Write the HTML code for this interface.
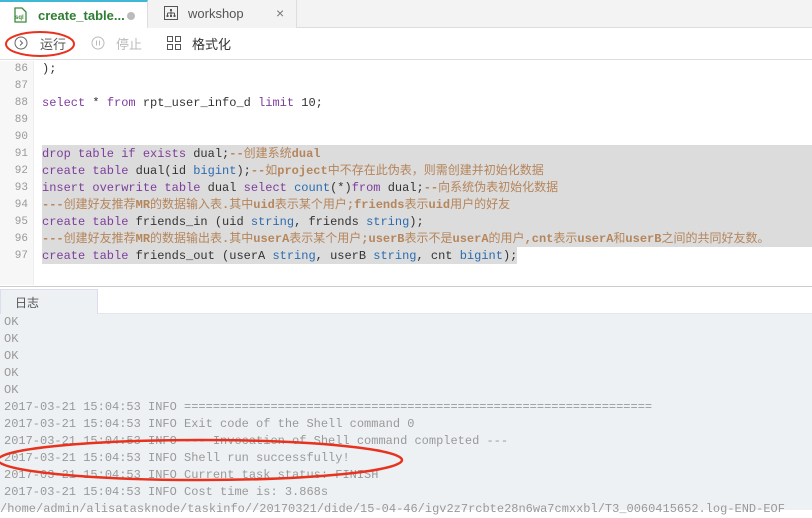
<!DOCTYPE html>
<html><head><meta charset="utf-8"><style>
*{margin:0;padding:0;box-sizing:border-box}
body{width:812px;height:510px;overflow:hidden;background:#fff;font-family:"Liberation Sans","Noto Sans CJK SC",sans-serif;position:relative}
.tabs{position:absolute;left:0;top:0;width:812px;height:28px;background:#f3f3f3;border-bottom:1px solid #ddd}
.tab1{position:absolute;left:0;top:0;width:148px;height:29px;background:#fff;border-top:2px solid #3fb8d8;border-right:1px solid #ddd}
.tab2{position:absolute;left:148px;top:0;width:149px;height:28px;background:#f3f3f3;border-right:1px solid #ddd}
.tb{position:absolute;left:0;top:28px;width:812px;height:32px;border-bottom:1px solid #ddd;background:#fff;font-size:13px;color:#555}
.gut{position:absolute;left:0;top:61px;width:34px;height:224px;background:#f7f7f7;border-right:1px solid #eee}
.code,.log{font-family:"Liberation Mono","Noto Sans CJK SC",monospace;font-size:12px;white-space:pre}
.ln{position:absolute;left:0;width:28px;text-align:right;color:#999;font-size:11px;line-height:17px}
.cl{position:absolute;left:42px;line-height:17px;color:#333}
.k{color:#7d3d9c}.t{color:#2b6cb0}.c{color:#b5855b}.cb{color:#b5855b;font-weight:bold}
.sel{position:absolute;background:#dcdcdc}
.logtabs{position:absolute;left:0;top:286px;width:812px;height:28px;background:#fff;border-top:1px solid #ccc;border-bottom:1px solid #e3e6ea}
.logtab{position:absolute;left:0;top:2px;width:98px;height:27px;background:#eef1f4;border:1px solid #dde;border-bottom:none;font-size:12px;color:#555;padding:4px 0 0 14px}
.logbody{position:absolute;left:0;top:314px;width:812px;height:196px;background:#eef1f4}
.lg{position:absolute;left:4px;line-height:17px;color:#999}
</style></head><body>
<div class="tabs">
 <div class="tab1">
  <svg style="position:absolute;left:13px;top:5px" width="14" height="16" viewBox="0 0 14 16"><path d="M2 1h7l4 4v10H2z" fill="none" stroke="#3a8a3a" stroke-width="1.3"/><text x="2" y="12" font-size="6" font-weight="bold" fill="#3a8a3a" font-family="Liberation Sans">sql</text></svg>
  <span style="position:absolute;left:38px;top:6px;font-size:13px;font-weight:bold;color:#2e7d32">create_table...</span>
  <span style="position:absolute;left:127px;top:10px;width:8px;height:8px;border-radius:50%;background:#bbb"></span>
 </div>
 <div class="tab2">
  <svg style="position:absolute;left:16px;top:6px" width="14" height="14" viewBox="0 0 14 14"><rect x="0.5" y="0.5" width="13" height="13" fill="none" stroke="#555"/><rect x="6" y="3" width="2" height="2" fill="#555"/><path d="M7 5v2M3.5 7h7M3.5 7v2M7 7v2M10.5 7v2" stroke="#555"/><rect x="2.5" y="9" width="2" height="2" fill="#555"/><rect x="6" y="9" width="2" height="2" fill="#555"/><rect x="9.5" y="9" width="2" height="2" fill="#555"/></svg>
  <span style="position:absolute;left:40px;top:6px;font-size:13px;color:#555">workshop</span>
  <span style="position:absolute;left:128px;top:5px;font-size:14px;color:#777">×</span>
 </div>
</div>
<div class="tb">
 <svg style="position:absolute;left:14px;top:8px" width="14" height="14"><circle cx="7" cy="7" r="6" fill="none" stroke="#666"/><path d="M6 4.5l2.5 2.5L6 9.5" fill="none" stroke="#666"/></svg>
 <span style="position:absolute;left:40px;top:6px">运行</span>
 <svg style="position:absolute;left:91px;top:8px" width="14" height="14"><circle cx="7" cy="7" r="6" fill="none" stroke="#bbb"/><path d="M5.5 4.5v5M8.5 4.5v5" stroke="#bbb"/></svg>
 <span style="position:absolute;left:116px;top:6px;color:#bbb">停止</span>
 <svg style="position:absolute;left:167px;top:8px" width="14" height="14"><rect x="0.5" y="0.5" width="5" height="5" fill="none" stroke="#555"/><rect x="8.5" y="0.5" width="5" height="5" fill="none" stroke="#555"/><rect x="0.5" y="8.5" width="5" height="5" fill="none" stroke="#555"/><rect x="8.5" y="8.5" width="5" height="5" fill="none" stroke="#555"/></svg>
 <span style="position:absolute;left:192px;top:6px;color:#333">格式化</span>
</div>
<svg style="position:absolute;left:4px;top:29px" width="72" height="30"><ellipse cx="36" cy="15" rx="34" ry="12" fill="none" stroke="#e8321e" stroke-width="2"/></svg>
<div class="gut"></div>
<div class="sel" style="left:42px;top:145px;width:770px;height:102px"></div>
<div class="sel" style="left:42px;top:247px;width:475px;height:17px"></div>
<div class="code">
<div class="ln" style="top:61px">86</div><div class="ln" style="top:78px">87</div><div class="ln" style="top:95px">88</div><div class="ln" style="top:112px">89</div><div class="ln" style="top:129px">90</div><div class="ln" style="top:146px">91</div><div class="ln" style="top:163px">92</div><div class="ln" style="top:180px">93</div><div class="ln" style="top:197px">94</div><div class="ln" style="top:214px">95</div><div class="ln" style="top:231px">96</div><div class="ln" style="top:248px">97</div>
<div class="cl" style="top:61px">);</div>
<div class="cl" style="top:95px"><span class="k">select</span> * <span class="k">from</span> rpt_user_info_d <span class="k">limit</span> 10;</div>
<div class="cl" style="top:146px"><span class="k">drop table if exists</span> dual;<span class="cb">--</span><span class="c">创建系统</span><span class="cb">dual</span></div>
<div class="cl" style="top:163px"><span class="k">create table</span> dual(id <span class="t">bigint</span>);<span class="cb">--</span><span class="c">如</span><span class="cb">project</span><span class="c">中不存在此伪表，则需创建并初始化数据</span></div>
<div class="cl" style="top:180px"><span class="k">insert overwrite table</span> dual <span class="k">select</span> <span class="t">count</span>(*)<span class="k">from</span> dual;<span class="cb">--</span><span class="c">向系统伪表初始化数据</span></div>
<div class="cl" style="top:197px"><span class="cb">---</span><span class="c">创建好友推荐</span><span class="cb">MR</span><span class="c">的数据输入表</span><span class="cb">.</span><span class="c">其中</span><span class="cb">uid</span><span class="c">表示某个用户</span><span class="cb">;friends</span><span class="c">表示</span><span class="cb">uid</span><span class="c">用户的好友</span></div>
<div class="cl" style="top:214px"><span class="k">create table</span> friends_in (uid <span class="t">string</span>, friends <span class="t">string</span>);</div>
<div class="cl" style="top:231px"><span class="cb">---</span><span class="c">创建好友推荐</span><span class="cb">MR</span><span class="c">的数据输出表</span><span class="cb">.</span><span class="c">其中</span><span class="cb">userA</span><span class="c">表示某个用户</span><span class="cb">;userB</span><span class="c">表示不是</span><span class="cb">userA</span><span class="c">的用户</span><span class="cb">,cnt</span><span class="c">表示</span><span class="cb">userA</span><span class="c">和</span><span class="cb">userB</span><span class="c">之间的共同好友数。</span></div>
<div class="cl" style="top:248px"><span class="k">create table</span> friends_out (userA <span class="t">string</span>, userB <span class="t">string</span>, cnt <span class="t">bigint</span>);</div>
</div>
<div class="logtabs"><div class="logtab">日志</div></div>
<div class="logbody"></div>
<div class="log">
<div class="lg" style="top:314px">OK</div>
<div class="lg" style="top:331px">OK</div>
<div class="lg" style="top:348px">OK</div>
<div class="lg" style="top:365px">OK</div>
<div class="lg" style="top:382px">OK</div>
<div class="lg" style="top:399px">2017-03-21 15:04:53 INFO =================================================================</div>
<div class="lg" style="top:416px">2017-03-21 15:04:53 INFO Exit code of the Shell command 0</div>
<div class="lg" style="top:433px">2017-03-21 15:04:53 INFO --- Invocation of Shell command completed ---</div>
<div class="lg" style="top:450px">2017-03-21 15:04:53 INFO Shell run successfully!</div>
<div class="lg" style="top:467px">2017-03-21 15:04:53 INFO Current task status: FINISH</div>
<div class="lg" style="top:484px">2017-03-21 15:04:53 INFO Cost time is: 3.868s</div>
<div class="lg" style="top:501px;left:0">/home/admin/alisatasknode/taskinfo//20170321/dide/15-04-46/igv2z7rcbte28n6wa7cmxxbl/T3_0060415652.log-END-EOF</div>
</div>
<svg style="position:absolute;left:0;top:436px" width="410" height="50"><ellipse cx="200" cy="24" rx="202" ry="20" fill="none" stroke="#e8321e" stroke-width="2.5"/></svg>
</body></html>
